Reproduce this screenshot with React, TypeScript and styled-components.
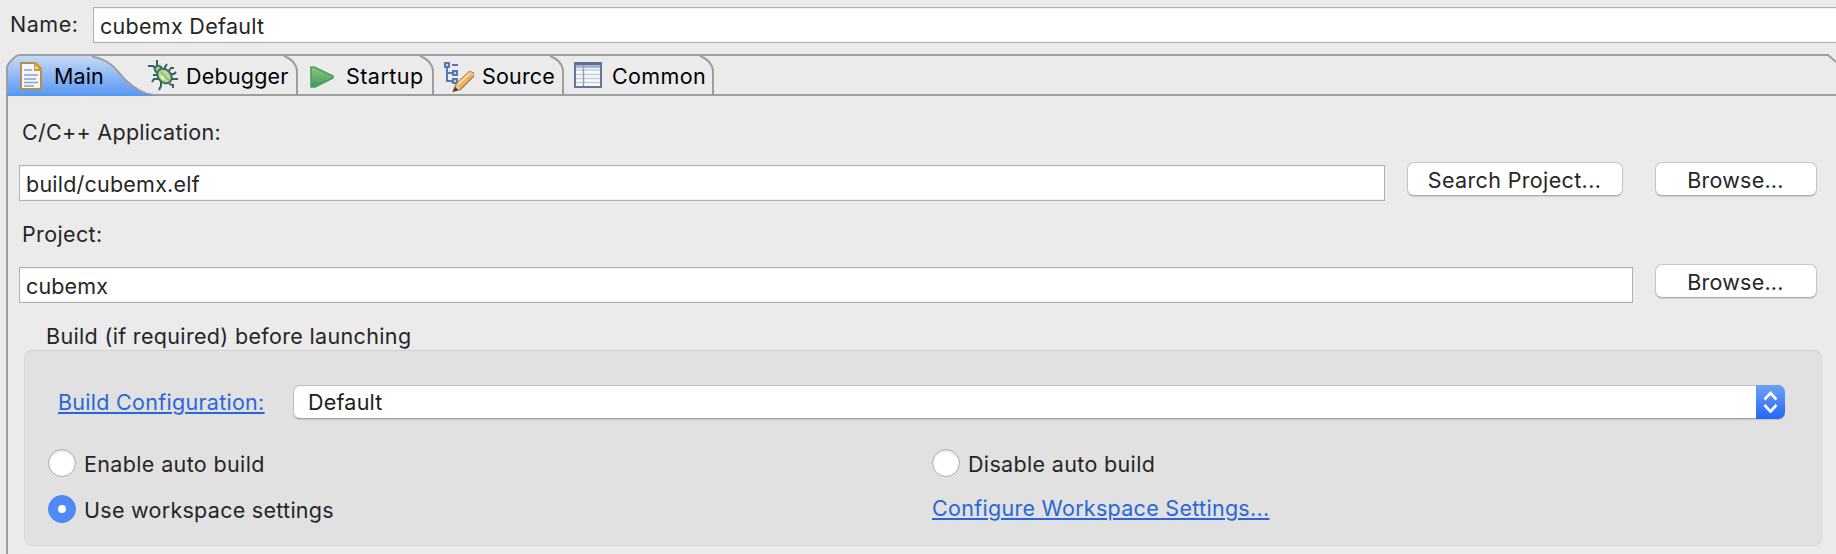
import React from "react";
import styled, { createGlobalStyle } from "styled-components";

const line = "#9e9e9e";

const GlobalStyle = createGlobalStyle`
  * { box-sizing: border-box; }
  body {
    margin: 0;
    background: #ebebeb;
    overflow: hidden;
    font-family: Inter, "Liberation Sans", sans-serif;
    font-size: 21.5px;
    line-height: 26px;
    color: #262626;
  }
`;

const Text = styled.span<{ $track?: number }>`
  display: block;
  white-space: nowrap;
  letter-spacing: ${(p) => p.$track ?? 0.3}px;
`;

const Dialog = styled.main`
  width: 1836px;
  height: 554px;
  display: flex;
  flex-direction: column;
  overflow: hidden;
`;

const NameRow = styled.div`
  flex: none;
  height: 54px;
  padding: 7px 0 0 10px;
  display: flex;
  align-items: flex-start;
`;

const NameLabel = styled(Text)`
  flex: none;
  width: 83px;
  padding-top: 4px;
`;

const Field = styled.div<{ $width: number }>`
  flex: none;
  width: ${(p) => p.$width}px;
  height: 36px;
  padding: 5px 0 0 6px;
  background: #fff;
  border: 1px solid #b0b0b0;
  box-shadow: inset 0 1px 0 #f2f2f2, inset 0 -1px 0 #f2f2f2;
`;

const TabBar = styled.div`
  flex: none;
  position: relative;
  height: 42px;
  margin-left: 6px;
  display: flex;
  border-bottom: 2px solid ${line};
`;

const Outline = styled.svg`
  position: absolute;
  left: 0;
  top: 0;
`;

const TabItem = styled.div<{ $width: number; $icon: number; $text: number }>`
  position: relative;
  width: ${(p) => p.$width}px;
  height: 40px;
  display: grid;
  grid-template-columns: ${(p) => p.$text - p.$icon}px 1fr;
  align-items: start;
  padding-left: ${(p) => p.$icon}px;
  color: #000;
`;

const TabIcon = styled.svg`
  display: block;
  margin-top: 6px;
`;

const TabText = styled(Text)`
  padding-top: 9px;
`;

const Page = styled.section`
  flex: 1;
  margin-left: 6px;
  border-left: 2px solid ${line};
  padding: 23px 14px 0 11px;
  display: flex;
  flex-direction: column;
`;

const FieldLabel = styled(Text)`
  height: 43px;
  padding-left: 3px;
`;

const FieldRow = styled.div`
  display: flex;
  height: 59px;
  align-items: flex-start;
  padding-top: 3px;
`;

const PushButton = styled.div<{ $width: number; $gap: number }>`
  width: ${(p) => p.$width}px;
  height: 34px;
  margin: -3px 0 0 ${(p) => p.$gap}px;
  padding: 4px 1px 0 0;
  text-align: center;
  color: #262626;
  background: #fff;
  border: 1px solid #c6c6c6;
  border-bottom-color: #adadad;
  border-radius: 7px;
  box-shadow: 0 1px 1px rgba(0, 0, 0, 0.12);
`;

const GroupTitle = styled(Text)`
  padding-left: 27px;
  height: 27px;
`;

const Group = styled.div`
  height: 196px;
  margin-left: 5px;
  width: 1798px;
  padding: 34px 0 0 23px;
  background: #e1e1e1;
  border: 1px solid #dadada;
  border-top-color: #d0d0d0;
  border-radius: 8px;
`;

const ConfigRow = styled.div`
  display: flex;
  height: 64px;
  padding-left: 10px;
`;

const Link = styled(Text)`
  color: #2a67d6;
  text-decoration: underline;
  text-decoration-thickness: 2px;
  text-underline-offset: 2px;
`;

const ConfigLink = styled(Link)`
  width: 235px;
  padding-top: 4px;
`;

const Select = styled.div`
  width: 1492px;
  height: 34px;
  display: flex;
  justify-content: space-between;
  padding-left: 14px;
  color: #1c1c1c;
  background: #fff;
  border: 1px solid #c0c0c0;
  border-bottom-color: #a2a2a2;
  border-radius: 7px;
  box-shadow: 0 1px 1px rgba(0, 0, 0, 0.12);
`;

const SelectText = styled(Text)`
  padding-top: 3px;
`;

const Stepper = styled.div`
  width: 29px;
  height: 34px;
  margin: -1px -1px 0 0;
  border-radius: 0 7px 7px 0;
  background: linear-gradient(#6da1f6, #2467f5);
`;

const Options = styled.div`
  display: grid;
  grid-template-columns: 884px 1fr;
  grid-template-rows: 46px 46px;
`;

const Option = styled.div`
  display: flex;
  align-items: flex-start;
  gap: 8px;
`;

const OptionText = styled(Text)`
  padding-top: 2px;
`;

const Radio = styled.i<{ $on?: boolean }>`
  width: 28px;
  height: 28px;
  border-radius: 50%;
  display: grid;
  place-items: center;
  background: ${(p) => (p.$on ? "#4f8af7" : "#fff")};
  border: 1px solid ${(p) => (p.$on ? "#4a84ee" : "#adadad")};
  box-shadow: ${(p) => (p.$on ? "none" : "inset 0 2px 2px rgba(0,0,0,.1)")};
  &::after {
    content: "";
    width: 8px;
    height: 8px;
    border-radius: 50%;
    background: #fff;
  }
`;

const SettingsLink = styled(Link)`
  justify-self: start;
  height: 26px;
`;

const TabOutline = () => (
  <Outline width="1830" height="42" viewBox="6 54 1830 42" fill="none">
    <defs>
      <linearGradient id="active" x1="0" y1="0" x2="0" y2="1">
        <stop offset="0" stopColor="#c9dbf6" />
        <stop offset="1" stopColor="#5797f4" />
      </linearGradient>
    </defs>
    <path
      d="M6 96V68l3-6 5-5 6-2h72c6 1 11 4 16 7 9 6 13 13 19 19 8 8 16 13 27 15Z"
      fill="url(#active)"
    />
    <path
      d="M7 96V68c0-3 2-5 4-7 3-3 5-6 9-6H1828l8 7M92 56.5c6 1 11 3 16 6 8 5 12 12 18 18s18 14 28 14.5M284 56c8 3 12 8 13 14V95M420 56c8 3 12 8 13 14V95M550 56c8 3 12 8 13 14V95M700 56c8 3 12 8 13 14V95"
      stroke={line}
      strokeWidth="2"
    />
    <path d="M7 94H148l7 2H6Z" fill="#5797f4" />
  </Outline>
);

const DocumentIcon = () => (
  <TabIcon width="24" height="32" viewBox="19 60 24 32">
    <path d="M21 63H35L41 69V89H21Z" fill="#f3f7fd" stroke="#b39248" strokeWidth="2" />
    <path d="M34 62h2l6 6v3h-8Z" fill="#c99a3c" />
    <path d="M35 65v4h4Z" fill="#f5dda0" />
    <path d="M24 70h8M24 75h14M24 79h12M24 82.500h14M24 86h10" stroke="#8a9fce" strokeWidth="1.6" />
  </TabIcon>
);

const BugIcon = () => (
  <TabIcon width="32" height="32" viewBox="148 60 32 32">
    <g fill="none" stroke="#3c5f60" strokeWidth="2">
      <path d="M157 60v5l2 3M148 66h5l3 3M153 75h6M152 82l2-3h5M159 90l2-4v-4M167 64l-2 3v3M174 68h-3l-3 4M170 74h4l2-2M172 79h6M169 84l4 1v3" />
    </g>
    <ellipse cx="158.500" cy="69.500" rx="3.500" ry="4" fill="#a8cc88" stroke="#376c68" strokeWidth="2" transform="rotate(-45 158.5 69.5)" />
    <ellipse cx="164.500" cy="76" rx="6.300" ry="8" fill="#b9d98c" stroke="#34706e" strokeWidth="2" transform="rotate(-45 164.5 76)" />
    <path d="M160.500 71.500l8.500 9" stroke="#7fb26c" strokeWidth="1.2" />
    <path d="M161 75.500l3 4" stroke="#e2f2c0" strokeWidth="2.4" />
  </TabIcon>
);

const PlayIcon = () => (
  <TabIcon width="28" height="32" viewBox="308 60 28 32">
    <defs>
      <linearGradient id="play" x1="0" y1="0" x2="0" y2="1">
        <stop offset="0" stopColor="#93c47f" />
        <stop offset="1" stopColor="#3f9a5a" />
      </linearGradient>
    </defs>
    <path d="M311 67h3L333 76v2L315 87h-4Z" fill="url(#play)" stroke="#4b9f5e" strokeWidth="1.6" />
  </TabIcon>
);

const SourceIcon = () => (
  <TabIcon width="34" height="34" viewBox="442 60 34 34">
    <g fill="none" stroke="#5878b0" strokeWidth="2">
      <path d="M447 67V81h6M447 73h6M452 65h6" />
      <path d="M445 63h4v4h-4zM453 71h4v4h-4zM453 79h4v4h-4z" fill="#c8d6ee" />
    </g>
    <path d="M453 91.500l3-7.500L469.500 71.500l4 1.500v3.500L460.500 89.500Z" fill="#edb45f" stroke="#a5713e" strokeWidth="1.1" />
    <path d="M458 84l12-11" stroke="#ffe2a3" strokeWidth="2" />
    <path d="M453.500 91l3-6.500 2 1 1.500 3.500Z" fill="#e2c8a4" />
    <path d="M453 91.800l2-5 3.500 3.200Z" fill="#4b3d32" />
    <path d="M469.500 71.500l4 1.500v3.500l-5.500-3.500Z" fill="#e9bea0" />
  </TabIcon>
);

const TableIcon = () => (
  <TabIcon width="30" height="32" viewBox="573 60 30 32">
    <path d="M575 63H601V87H575Z" fill="#f8fafc" stroke="#63759c" strokeWidth="2" />
    <path d="M574 62h28v3h-28z" fill="#5d7099" />
    <path d="M576 65h24v3h-24z" fill="#a5b5cf" />
    <path d="M576 70h24M576 74.500h24M576 78.500h24M576 82.500h24" stroke="#c3cad8" strokeWidth="1.3" />
    <path d="M583.500 65v21" stroke="#8b9bb8" strokeWidth="1.4" />
  </TabIcon>
);

export default function App() {
  return (
    <>
      <GlobalStyle />
      <Dialog>
        <NameRow>
          <NameLabel $track={0.55}>Name:</NameLabel>
          <Field $width={1760}>
            <Text $track={0.29}>cubemx Default</Text>
          </Field>
        </NameRow>

        <TabBar>
          <TabOutline />
          <TabItem $width={142} $icon={13} $text={48}>
            <DocumentIcon />
            <TabText $track={0.1}>Main</TabText>
          </TabItem>
          <TabItem $width={150} $icon={0} $text={38}>
            <BugIcon />
            <TabText $track={0.22}>Debugger</TabText>
          </TabItem>
          <TabItem $width={136} $icon={10} $text={48}>
            <PlayIcon />
            <TabText $track={0.47}>Startup</TabText>
          </TabItem>
          <TabItem $width={130} $icon={8} $text={48}>
            <SourceIcon />
            <TabText $track={0.17}>Source</TabText>
          </TabItem>
          <TabItem $width={150} $icon={9} $text={48}>
            <TableIcon />
            <TabText $track={0.37}>Common</TabText>
          </TabItem>
        </TabBar>

        <Page>
          <FieldLabel $track={0.28}>C/C++ Application:</FieldLabel>
          <FieldRow>
            <Field $width={1366}>
              <Text $track={0.22}>build/cubemx.elf</Text>
            </Field>
            <PushButton $width={216} $gap={22}>
              <Text $track={0.36}>Search Project...</Text>
            </PushButton>
            <PushButton $width={162} $gap={32}>
              <Text $track={0.23}>Browse...</Text>
            </PushButton>
          </FieldRow>
          <FieldLabel $track={0.37}>Project:</FieldLabel>
          <FieldRow>
            <Field $width={1614}>
              <Text $track={0.15}>cubemx</Text>
            </Field>
            <PushButton $width={162} $gap={22}>
              <Text $track={0.23}>Browse...</Text>
            </PushButton>
          </FieldRow>
          <GroupTitle $track={0.34}>Build (if required) before launching</GroupTitle>
          <Group>
            <ConfigRow>
              <ConfigLink $track={0.28}>Build Configuration:</ConfigLink>
              <Select>
                <SelectText $track={0.22}>Default</SelectText>
                <Stepper>
                  <svg width="29" height="34" fill="none" stroke="#fff" strokeWidth="2.6">
                    <path d="M8.500 14.500L14.500 8l6 6.500M8.500 20l6 6.500 6-6.500" />
                  </svg>
                </Stepper>
              </Select>
            </ConfigRow>
            <Options>
              <Option>
                <Radio />
                <OptionText $track={0.36}>Enable auto build</OptionText>
              </Option>
              <Option>
                <Radio />
                <OptionText $track={0.34}>Disable auto build</OptionText>
              </Option>
              <Option>
                <Radio $on />
                <OptionText $track={0.28}>Use workspace settings</OptionText>
              </Option>
              <SettingsLink $track={0.29}>Configure Workspace Settings...</SettingsLink>
            </Options>
          </Group>
        </Page>
      </Dialog>
    </>
  );
}
